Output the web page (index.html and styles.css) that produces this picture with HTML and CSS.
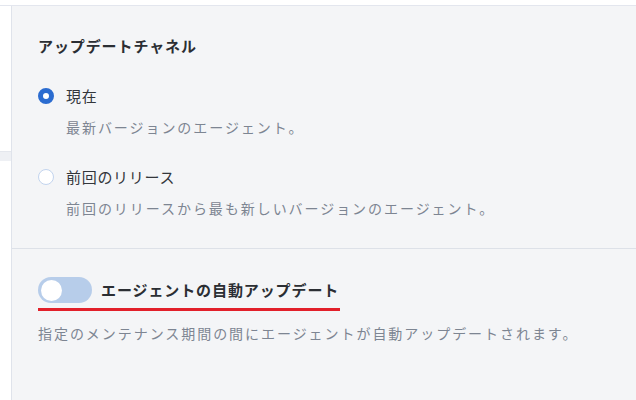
FILE: index.html
```html
<!DOCTYPE html>
<html lang="ja">
<head>
<meta charset="utf-8">
<link rel="stylesheet" href="styles.css">
</head>
<body>
<div class="topbar"></div>
<div class="layout">
  <div class="side"><div class="side-band"></div></div>
  <main class="panel">
    <section class="section channel">
      <h2 class="title">アップデートチャネル</h2>
      <div class="option">
        <div class="radio-row"><span class="radio checked"></span><span class="opt-label">現在</span></div>
        <p class="desc indent">最新バージョンのエージェント。</p>
      </div>
      <div class="option">
        <div class="radio-row"><span class="radio"></span><span class="opt-label">前回のリリース</span></div>
        <p class="desc indent">前回のリリースから最も新しいバージョンのエージェント。</p>
      </div>
    </section>
    <section class="section auto">
      <div class="toggle-row">
        <span class="toggle"><span class="knob"></span></span>
        <span class="toggle-label">エージェントの自動アップデート</span>
      </div>
      <div class="mark"></div>
      <p class="desc">指定のメンテナンス期間の間にエージェントが自動アップデートされます。</p>
    </section>
  </main>
</div>
</body>
</html>
```
FILE: styles.css
```css
* { box-sizing: border-box; }
html, body { margin: 0; padding: 0; }
body {
  width: 636px;
  height: 400px;
  overflow: hidden;
  background: #ffffff;
  font-family: "Noto Sans CJK JP", "Noto Sans", sans-serif;
  color: #2d3035;
}
.topbar {
  height: 6px;
  background: #ffffff;
  border-bottom: 1px solid #e3e6ee;
}
.layout {
  display: flex;
  height: 394px;
}
.side {
  width: 12px;
  flex: none;
  background: #ffffff;
  border-right: 1px solid #dfe3eb;
  padding-top: 145px;
}
.side-band {
  height: 10px;
  background: #eef0f4;
  border-top: 1px solid #e4e7ed;
}
.panel {
  flex: 1;
  background: #f4f5f7;
}
.section { padding-left: 26px; }
.channel {
  padding-top: 30px;
  padding-bottom: 30px;
  border-bottom: 1px solid #dde1e8;
}
.title {
  margin: 0;
  font-size: 15px;
  line-height: 20px;
  font-weight: 700;
  letter-spacing: 0.9px;
  color: #2b2e33;
}
.option { margin-top: 30px; }
.radio-row {
  display: flex;
  align-items: center;
  height: 20px;
  gap: 12px;
}
.radio {
  width: 16px;
  height: 16px;
  border-radius: 50%;
  background: #ffffff;
  border: 1px solid #c2d4ee;
  flex: none;
}
.radio.checked {
  border: 5px solid #2b6cd0;
}
.opt-label {
  font-size: 15px;
  line-height: 20px;
  letter-spacing: 0.7px;
  color: #33363b;
}
.desc {
  margin: 11px 0 0;
  font-size: 14px;
  line-height: 20px;
  letter-spacing: 1.95px;
  color: #7d8592;
}
.indent { padding-left: 28px; }
.auto { padding-top: 28px; }
.toggle-row {
  display: flex;
  align-items: center;
  gap: 9px;
  height: 26px;
}
.toggle {
  width: 54px;
  height: 26px;
  border-radius: 13px;
  background: #b7cdea;
  display: flex;
  align-items: center;
  padding-left: 3px;
  flex: none;
}
.knob {
  width: 21px;
  height: 21px;
  border-radius: 50%;
  background: #ffffff;
}
.toggle-label {
  font-size: 15px;
  line-height: 20px;
  font-weight: 700;
  letter-spacing: 0.9px;
  color: #2b2e33;
}
.mark {
  width: 302px;
  height: 3px;
  margin-top: 5px;
  background: #e2202a;
}
.auto .desc { margin-top: 12px; }
```
